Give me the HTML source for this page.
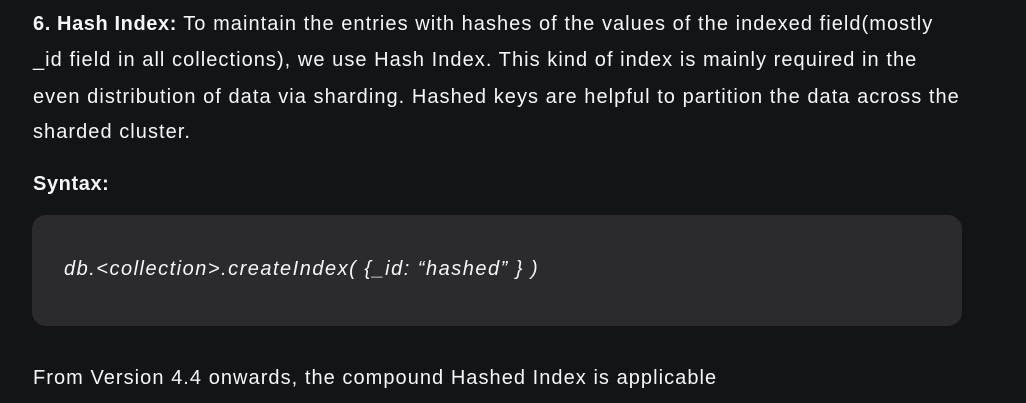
<!DOCTYPE html>
<html><head><meta charset="utf-8"><style>
html,body{margin:0;padding:0;background:#131417;width:1026px;height:403px;overflow:hidden}
body{font-family:"Liberation Sans",sans-serif;color:#f5f6f7;font-size:20px;letter-spacing:1.05px;position:relative}
.l{position:absolute;left:33px;white-space:nowrap;line-height:24px}
b{font-weight:bold;letter-spacing:0.6px}
.code{position:absolute;left:32px;top:215px;width:930px;height:111px;background:#2b2b2e;border-radius:14px}
.ct{position:absolute;left:64px;top:257px;font-style:italic;white-space:nowrap;line-height:24px;letter-spacing:1.5px}
</style></head><body>
<div class="l" style="top:12px"><b>6. Hash Index:</b> To maintain the entries with hashes of the values of the indexed field(mostly</div>
<div class="l" style="top:48px">_id field in all collections), we use Hash Index. This kind of index is mainly required in the</div>
<div class="l" style="top:85px">even distribution of data via sharding. Hashed keys are helpful to partition the data across the</div>
<div class="l" style="top:120px">sharded cluster.</div>
<div class="l" style="top:172px"><b>Syntax:</b></div>
<div class="code"></div>
<div class="ct">db.&lt;collection&gt;.createIndex( {_id: “hashed” } )</div>
<div class="l" style="top:366px">From Version 4.4 onwards, the compound Hashed Index is applicable</div>
</body></html>
